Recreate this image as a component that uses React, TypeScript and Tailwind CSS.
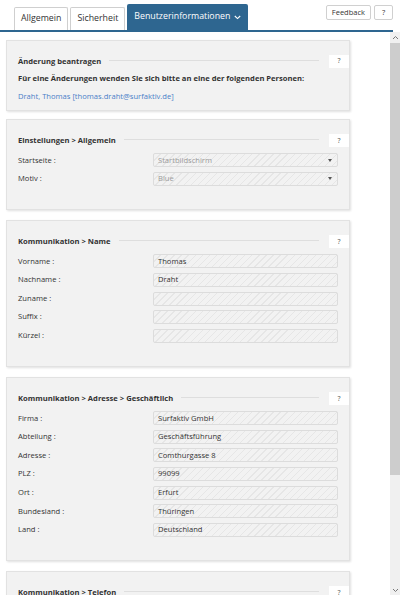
import React from 'react';

type Row = { label: string; value?: string; select?: boolean };

const hatch =
  'bg-[repeating-linear-gradient(135deg,#f2f2f2_0px,#f2f2f2_4px,#e6e6e6_4px,#e6e6e6_5px)]';

function HelpButton() {
  return (
    <div className="w-[20px] h-[13px] bg-white flex items-center justify-center text-[7px] text-[#555] shrink-0">
      ?
    </div>
  );
}

function PanelTitle({ title }: { title: string }) {
  return (
    <div className="flex items-center h-[13px] pl-[11px]">
      <span className="font-bold text-[7.6px] text-[#333] whitespace-nowrap">{title}</span>
      <div className="flex-1 h-px bg-[#dedede] ml-[8px] mr-[10px] mb-[2px]" />
      <HelpButton />
    </div>
  );
}

function Field({ row }: { row: Row }) {
  return (
    <div className="flex items-center h-[14px]">
      <div className="w-[135px] text-[7.6px] text-[#333]">{row.label}</div>
      <div
        className={`flex-1 h-[14px] border border-[#dcdcdc] rounded-[2px] ${hatch} flex items-center px-[4px] text-[7.6px] ${
          row.select ? 'text-[#9a9a9a]' : 'text-[#333]'
        }`}
      >
        <span className="flex-1">{row.value}</span>
        {row.select && (
          <span className="w-0 h-0 border-l-[2.5px] border-r-[2.5px] border-t-[3px] border-l-transparent border-r-transparent border-t-[#555] mr-[1px]" />
        )}
      </div>
    </div>
  );
}

function FormPanel({ title, rows }: { title: string; rows: Row[] }) {
  return (
    <div className="bg-[#f2f2f2] border border-[#e2e2e2] shadow-[1px_1px_2px_rgba(0,0,0,0.12)] pt-[14.5px] pb-[23px]">
      <PanelTitle title={title} />
      <div className="flex flex-col gap-[4.6px] mt-[6px] pl-[11px] pr-[11px]">
        {rows.map((r) => (
          <Field key={r.label} row={r} />
        ))}
      </div>
    </div>
  );
}

const SETTINGS: Row[] = [
  { label: 'Startseite :', value: 'Startbildschirm', select: true },
  { label: 'Motiv :', value: 'Blue', select: true },
];

const NAME: Row[] = [
  { label: 'Vorname :', value: 'Thomas' },
  { label: 'Nachname :', value: 'Draht' },
  { label: 'Zuname :' },
  { label: 'Suffix :' },
  { label: 'Kürzel :' },
];

const ADDRESS: Row[] = [
  { label: 'Firma :', value: 'Surfaktiv GmbH' },
  { label: 'Abteilung :', value: 'Geschäftsführung' },
  { label: 'Adresse :', value: 'Comthurgasse 8' },
  { label: 'PLZ :', value: '99099' },
  { label: 'Ort :', value: 'Erfurt' },
  { label: 'Bundesland :', value: 'Thüringen' },
  { label: 'Land :', value: 'Deutschland' },
];

const PHONE: Row[] = [
  { label: 'Telefon :' },
  { label: 'Mobil :' },
];

export default function App() {
  return (
    <div className="w-[400px] h-[595px] overflow-hidden bg-white flex flex-col font-['Open_Sans','Noto_Sans',sans-serif]">
      {/* tabs */}
      <div className="h-[32px] mr-[7px] border-b-2 border-[#2e6690] flex items-end pl-[14px] shrink-0">
        <div className="flex items-end gap-[2px] h-full">
          <div className="h-[23px] px-[6px] border border-b-0 border-[#cfcfcf] rounded-t-[2px] bg-white flex items-center text-[8.8px] text-[#333]">
            Allgemein
          </div>
          <div className="h-[23px] px-[6px] border border-b-0 border-[#cfcfcf] rounded-t-[2px] bg-white flex items-center text-[8.8px] text-[#333]">
            Sicherheit
          </div>
          <div className="h-[26px] px-[7px] rounded-t-[2px] bg-[#2e6690] flex items-center gap-[4px] text-[8.8px] text-white">
            Benutzerinformationen
            <svg width="7" height="5" viewBox="0 0 7 5" fill="none">
              <path d="M0.8 1 L3.5 3.6 L6.2 1" stroke="white" strokeWidth="1.1" />
            </svg>
          </div>
        </div>
        <div className="ml-auto self-start mt-[5px] flex gap-[3px]">
          <div className="h-[15px] px-[5px] border border-[#d0d0d0] rounded-[2px] bg-white flex items-center text-[7.5px] text-[#333]">
            Feedback
          </div>
          <div className="h-[15px] w-[19px] border border-[#d0d0d0] rounded-[2px] bg-white flex items-center justify-center text-[7.5px] text-[#333]">
            ?
          </div>
        </div>
      </div>

      <div className="flex-1 flex min-h-0">
        <div className="flex-1 pl-[6px] pr-[40px] pt-[8px] flex flex-col gap-[10px] overflow-hidden">
          <div className="bg-[#f2f2f2] border border-[#e2e2e2] shadow-[1px_1px_2px_rgba(0,0,0,0.12)] pt-[14px] pb-[7px] shrink-0 mb-[-2px]">
            <PanelTitle title="Änderung beantragen" />
            <div className="pl-[11px] mt-[5px] text-[7.6px] font-bold text-[#333]">
              Für eine Änderungen wenden Sie sich bitte an eine der folgenden Personen:
            </div>
            <div className="pl-[11px] mt-[7px] text-[7.6px] text-[#4a80c8]">
              Draht, Thomas [thomas.draht@surfaktiv.de]
            </div>
          </div>
          <div className="shrink-0">
            <FormPanel title="Einstellungen > Allgemein" rows={SETTINGS} />
          </div>
          <div className="shrink-0">
            <FormPanel title="Kommunikation > Name" rows={NAME} />
          </div>
          <div className="shrink-0">
            <FormPanel title="Kommunikation > Adresse > Geschäftlich" rows={ADDRESS} />
          </div>
          <div className="shrink-0">
            <FormPanel title="Kommunikation > Telefon" rows={PHONE} />
          </div>
        </div>

        {/* scrollbar */}
        <div className="w-[10px] bg-[#f0f0f0] flex flex-col items-center shrink-0">
          <svg width="7" height="8" viewBox="0 0 7 8" className="mt-[2px] shrink-0">
            <path d="M1 5 L3.5 2.5 L6 5" stroke="#777" strokeWidth="1" fill="none" />
          </svg>
          <div className="w-[10px] h-[432px] bg-[#cdcdcd] mt-[1px]" />
          <div className="flex-1" />
          <svg width="7" height="8" viewBox="0 0 7 8" className="mb-[1px] shrink-0">
            <path d="M1 3 L3.5 5.5 L6 3" stroke="#777" strokeWidth="1" fill="none" />
          </svg>
        </div>
      </div>
    </div>
  );
}
